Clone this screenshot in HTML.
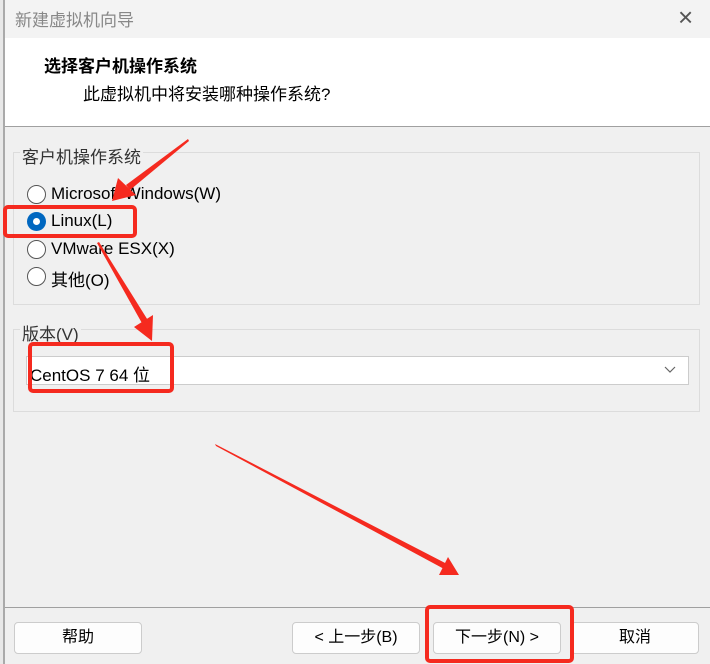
<!DOCTYPE html>
<html><head><meta charset="utf-8"><style>
*{margin:0;padding:0;box-sizing:border-box}
body{width:710px;height:664px;overflow:hidden;background:#f0f0f0;font-family:"Liberation Sans","Noto Sans CJK SC",sans-serif;position:relative;font-size:16px;color:#000}
.abs{position:absolute}
.radio{position:absolute;width:19px;height:19px;border:1.5px solid #555;border-radius:50%;background:#fff}
.btn{position:absolute;top:622px;height:32px;background:#fdfdfd;border:1px solid #ccc;border-radius:4px;text-align:center;line-height:30px;font-size:16px}
.grp{position:absolute;border:1px solid #dcdcdc}
.lbl{position:absolute;background:#f0f0f0;color:#333;font-size:17px;padding:0 2px}
.t{position:absolute;left:51px;font-size:17px}
</style></head><body>
<div class="abs" style="left:0;top:0;width:4px;height:664px;background:#e8e8e8"></div>
<div class="abs" style="left:3px;top:0;width:2px;height:664px;background:#aaa"></div>
<div class="abs" style="left:5px;top:0;width:705px;height:38px;background:#f3f3f3"></div>
<div class="abs" style="left:15px;top:6px;font-size:17px;color:#888">新建虚拟机向导</div>
<div class="abs" style="left:678px;top:2px;font-size:26px;color:#555;font-weight:300">×</div>
<div class="abs" style="left:5px;top:38px;width:705px;height:89px;background:#fff;border-bottom:1px solid #a0a0a0"></div>
<div class="abs" style="left:44px;top:52px;font-size:17px;font-weight:bold">选择客户机操作系统</div>
<div class="abs" style="left:83px;top:80px;font-size:17px">此虚拟机中将安装哪种操作系统?</div>
<div class="grp" style="left:13px;top:152px;width:687px;height:153px"></div>
<div class="lbl" style="left:20px;top:143px">客户机操作系统</div>
<div class="radio" style="left:27px;top:185px"></div><div class="t" style="top:184px">Microsoft Windows(W)</div>
<div class="radio" style="left:27px;top:212px;border:none;background:#0067c0"><div style="position:absolute;left:6px;top:6px;width:7px;height:7px;border-radius:50%;background:#fff"></div></div><div class="t" style="top:211px">Linux(L)</div>
<div class="radio" style="left:27px;top:240px"></div><div class="t" style="top:239px">VMware ESX(X)</div>
<div class="radio" style="left:27px;top:267px"></div><div class="t" style="top:266px">其他(O)</div>
<div class="grp" style="left:13px;top:329px;width:687px;height:83px"></div>
<div class="lbl" style="left:20px;top:320px">版本(V)</div>
<div class="abs" style="left:26px;top:356px;width:663px;height:29px;background:#fff;border:1px solid #ccc"></div>
<div class="abs" style="left:30px;top:361px;font-size:17px">CentOS 7 64 位</div>
<svg class="abs" style="left:663px;top:365px" width="14" height="10"><path d="M2 2 L7 7 L12 2" fill="none" stroke="#666" stroke-width="1.2"/></svg>
<div class="abs" style="left:5px;top:607px;width:705px;height:1px;background:#a0a0a0"></div>
<div class="btn" style="left:14px;width:128px">帮助</div>
<div class="btn" style="left:292px;width:128px">&lt; 上一步(B)</div>
<div class="btn" style="left:433px;width:128px">下一步(N) &gt;</div>
<div class="btn" style="left:571px;width:128px">取消</div>
<svg class="abs" style="left:0;top:0" width="710" height="664">
<g fill="none" stroke="#f52a1f" stroke-width="4">
<rect x="5" y="207" width="130" height="29" rx="3"/>
<rect x="30" y="344" width="142" height="47" rx="3"/>
<rect x="427" y="607" width="145" height="54" rx="3"/>
</g>
<g fill="#f52a1f">
<polygon points="188,139 189,141 130,190 126,185"/>
<polygon points="112,201 118,178 136,195"/>
<polygon points="97,243 99,242 149,322 143,325"/>
<polygon points="152,341 134,327 153,315"/>
<polygon points="215,444 216,446 446,570 449,565"/>
<polygon points="459,575 439,575 448,557"/>
</g>
</svg>
</body></html>
